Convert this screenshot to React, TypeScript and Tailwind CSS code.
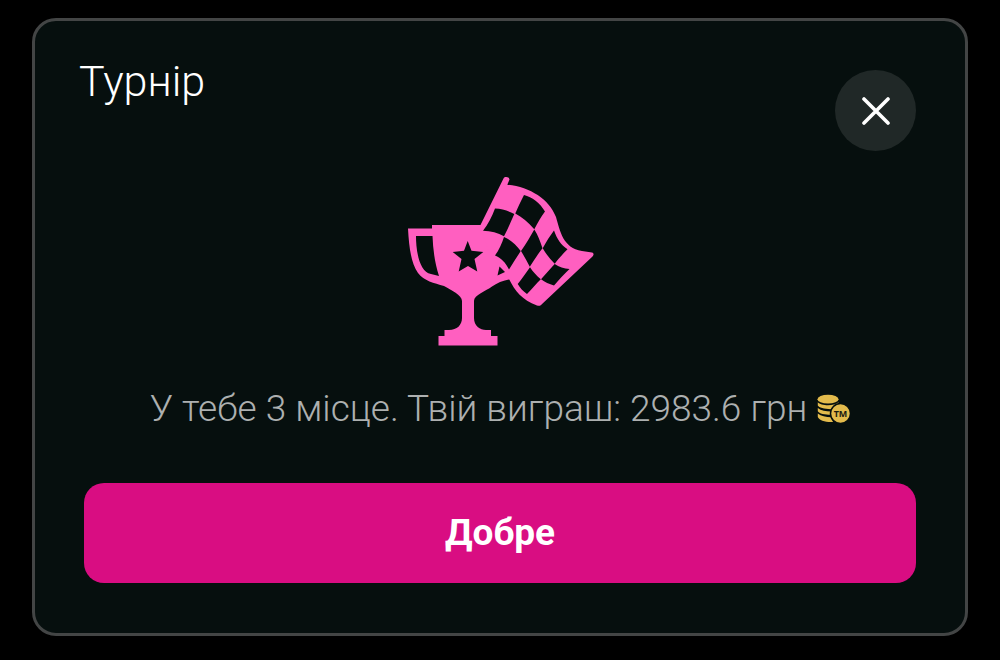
import { useState } from "react";

interface IconProps {
  className?: string;
}

function TrophyIcon({ className }: IconProps) {
  return (
    <svg viewBox="405 176 190 171" className={className} aria-hidden="true">
      <g fill="#ff5fc0" fillRule="evenodd">
        {/* Cup, with the gap inside the handle */}
        <path d="M408 228.500H432V225H482L505 215L512 279C504 280 497 283 492 286.500C486 291 474 295 474 301V318C474 326 480 330 486 330H491V336H497.500V345.500H438.500V336H444.500V330H449C457 330 462 325 462 318V301C462 295 451 290 444 286C434 283 424 281 418 273C411 263 409 247 408 228.500ZM416 236C416 250 419 272 431 274L439 276C435 264 433 250 432.500 236Z" />
        {/* Flag */}
        <path d="M480 226L503.500 178.500C504.500 176.500 509 176.500 509.500 179.500L507.300 184.700C530 187 549 199 556 217C560 231 563 248 582 251L592 252.500C594 253 594 255 592.500 256.500L541 305C540 306 538.500 306 537 305.500C522 300 515 291 509 279L490 255Z" />
      </g>
      <g fill="#060f0e">
        <path d="M467.700 241L471.500 250.700L483.300 252L474.500 259L477.300 271.500L468 266L458.700 271.500L461.500 259L452.700 252L464 250.700Z" />
        <path d="M495 208.500C502 208.500 508 211 514.300 214C511 221 508 229 504 236.300C498 233 491 231 483 230.800C488 224 492 217 495 208.500Z" />
        <path d="M524 195C532 197 540 203 545 211.500C541 217 538 222 534.300 229.300C528 222 522 217 515.300 213.500C518 207 521 201 524 195Z" />
        <path d="M504 237C511 240 516 245 520.700 251C517 257 513 263 509 269.500C506 263 501 258 495 255.500C499 250 502 243 504 237Z" />
        <path d="M534.300 229.500C538 235 540 241 542.500 248.300C538 254 534 260 529.800 266.700C527 261 524 256 521 251C526 244 530 237 534.300 229.500Z" />
        <path d="M554 230.500C557 239 561 245 567.500 249.300C563 254 559 258 554.700 263.700C550 259 546 254 542.700 248.300C546 242 550 236 554 230.500Z" />
        <path d="M530 267.300C533 272 537 276 540.800 279.300C536 284 532 289 527 294C523 291 520 288 517.700 284C522 279 526 273 530 267.300Z" />
        <path d="M554.700 264C559 267 564 268.500 569.500 269C564 274 559 280 554 285.500C549 284 545 282 541 279.200C546 274 550 269 554.700 264Z" />
        <path d="M499.500 266.500L505 272L497.500 275.500Z" />
      </g>
    </svg>
  );
}

function CoinsIcon({ className }: IconProps) {
  return (
    <svg viewBox="0 0 33 30" className={className} role="img" aria-label="TM">
      <g fill="#e3bb4c">
        <ellipse cx="11" cy="5.200" rx="10.500" ry="4.400" />
        <path d="M.8 8.300C4 12 17 12.500 21.500 8.300V12L14 15.200C7 15 2 13.500 .8 11.500Z" />
        <path d="M.8 14C4 16.800 9 17.500 14 17.500V20.800C8 20.800 2 19.500 .8 17.200Z" />
        <path d="M.8 19.600C4 22.300 9 23.200 14 23.200L16 28C9 28.500 2 26.500 .8 23Z" />
        <circle cx="23.500" cy="19.500" r="10" stroke="#060f0e" strokeWidth="1.500" />
      </g>
      <text
        x="23.500"
        y="22.800"
        textAnchor="middle"
        fontSize="9"
        fill="#1c1a10"
        className="font-['Open_Sans',sans-serif] font-bold"
      >
        TM
      </text>
    </svg>
  );
}

export default function App() {
  const [open, setOpen] = useState(true);
  const close = () => setOpen(false);

  return (
    <div className="min-h-screen bg-black px-8 py-[18px] font-[Roboto,sans-serif]">
      {open && (
        <div
          role="dialog"
          aria-labelledby="tournament-title"
          className="rounded-3xl border-3 border-[#434545] bg-[#060f0e]"
        >
          <div className="flex items-start justify-between pt-9 pr-[49px] pl-11">
            <h2 id="tournament-title" className="text-[43px] leading-12 font-light text-white">
              Турнір
            </h2>
            <button
              onClick={close}
              aria-label="Закрити"
              className="mt-[13px] flex size-[81px] items-center justify-center rounded-full bg-[#202827] text-white"
            >
              <svg viewBox="0 0 28 28" className="size-7" aria-hidden="true">
                <path d="M2 2L26 26M26 2L2 26" stroke="currentColor" strokeWidth="3.600" strokeLinecap="round" />
              </svg>
            </button>
          </div>

          <div className="flex flex-col items-center px-[49px] pt-[25px] pb-[50px]">
            <TrophyIcon className="h-[171px] w-[190px]" />

            <p className="mt-[38px] flex items-center gap-2.5 text-[37px] leading-12 font-light text-[#adb0b0]">
              У тебе 3 місце. Твій виграш: 2983.6 грн
              <CoinsIcon className="h-[30px] w-[33px]" />
            </p>

            <button
              onClick={close}
              className="mt-[50px] h-[100px] w-full rounded-[20px] bg-[#d90d82] text-[37px] font-bold text-white"
            >
              Добре
            </button>
          </div>
        </div>
      )}
    </div>
  );
}
